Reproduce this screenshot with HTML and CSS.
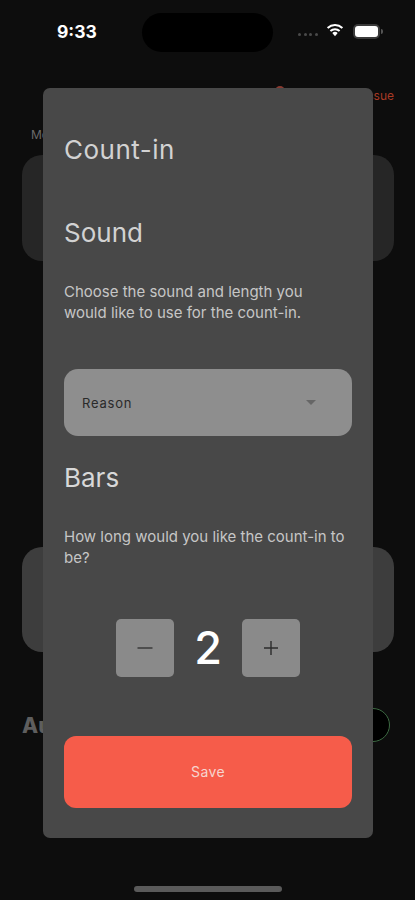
FILE: index.html
```html
<!DOCTYPE html>
<html lang="en">
<head>
<meta charset="utf-8">
<title>Count-in</title>
<link rel="stylesheet" href="styles.css">
</head>
<body>
<div class="screen">
  <div class="status">
    <span class="time">9:33</span>
    <div class="island"></div>
    <div class="status-icons">
      <div class="dots"><i></i><i></i><i></i><i></i></div>
      <svg class="wifi" width="18" height="14" viewBox="0 0 18 14"><path d="M9 13.2 6.3 10.1a3.9 3.9 0 0 1 5.4 0L9 13.2Z" fill="#fff"/><path d="M4.4 8a6.8 6.8 0 0 1 9.2 0" fill="none" stroke="#fff" stroke-width="2"/><path d="M1.6 4.9a11 11 0 0 1 14.8 0" fill="none" stroke="#fff" stroke-width="2"/></svg>
      <div class="battery"><div class="battery-fill"></div></div>
      <div class="battery-cap"></div>
    </div>
  </div>

  <div class="behind">
    <div class="issue">
      <span class="issue-icon"></span>
      <span>Report an issue</span>
    </div>
    <div class="label">Mode</div>
    <div class="card"></div>
    <div class="card card-second"></div>
    <div class="auto-row">
      <span class="auto">Auto</span>
      <span class="toggle"></span>
    </div>
  </div>

  <div class="modal">
    <h2 class="title">Count-in</h2>
    <h2 class="heading heading-sound">Sound</h2>
    <p class="copy copy-sound">Choose the sound and length you would like to use for the count-in.</p>
    <div class="select">
      <span>Reason</span>
      <span class="caret"></span>
    </div>
    <h2 class="heading heading-bars">Bars</h2>
    <p class="copy copy-bars">How long would you like the count-in to be?</p>
    <div class="stepper">
      <div class="step"><svg width="16" height="16" viewBox="0 0 16 16"><path d="M0.5 8h15" stroke="#484848" stroke-width="1.8"/></svg></div>
      <span class="value">2</span>
      <div class="step"><svg width="16" height="16" viewBox="0 0 16 16"><path d="M1 8h14M8 1v14" stroke="#2c2c2c" stroke-width="1.4"/></svg></div>
    </div>
    <div class="save">Save</div>
  </div>

  <div class="home-bar"></div>
</div>
</body>
</html>
```
FILE: styles.css
```css
* { box-sizing: border-box; }
html, body { margin: 0; padding: 0; background: #0d0d0d; }
body { font-family: Inter, "Noto Sans", sans-serif; }
.screen { position: relative; width: 415px; height: 900px; overflow: hidden; background: #0d0d0d; }

.status { display: flex; align-items: center; height: 40px; margin-top: 12px; padding: 0 0 0 57px; position: relative; }
.time { color: #fff; font-size: 17.5px; font-weight: 700; width: 85px; margin-top: -1px; }
.island { width: 131px; height: 39px; background: #000; border-radius: 20px; }
.status-icons { display: flex; align-items: center; margin-left: 25px; margin-top: -2px; }
.dots { display: flex; gap: 2.5px; margin-top: 6px; margin-right: 8px; }
.dots i { width: 3px; height: 3px; border-radius: 50%; background: #4a4a4a; }
.wifi { margin-right: 9px; margin-top: -2px; }
.battery { width: 27px; height: 15px; padding: 2px; border-radius: 5px; background: #3a3a3a; }
.battery-fill { width: 100%; height: 100%; background: #fff; border-radius: 3px; }
.battery-cap { width: 2px; height: 5px; margin-left: 1px; background: #555; border-radius: 0 2px 2px 0; }

.behind { padding: 34px 21px 0 22px; }
.issue { display: flex; align-items: center; justify-content: flex-end; gap: 21px; height: 18px; color: #a83a25; font-size: 12px; }
.issue-icon { align-self: flex-start; width: 10px; height: 10px; border-radius: 50%; background: #8a3a30; }
.label { color: #6a6a6a; font-size: 12px; line-height: 16px; margin: 23px 0 0 9px; }
.card { height: 106px; margin-top: 12px; background: #262626; border-radius: 20px; }
.card-second { margin-top: 286px; height: 105px; background: #3d3d3d; }
.auto-row { display: flex; align-items: center; justify-content: space-between; margin-top: 56px; padding-right: 4px; }
.auto { color: #5e5e5e; font-size: 21px; font-weight: 800; }
.toggle { width: 34px; height: 34px; border-radius: 50%; background: #000; border: 1.5px solid #3c6a42; }

.modal { position: absolute; left: 43px; top: 88px; width: 330px; height: 750px; padding: 0 21px; background: #484848; border-radius: 7px; }
.title, .heading { margin: 0; color: #d2d2d2; font-size: 26px; font-weight: 400; line-height: 32px; }
.title { margin-top: 46px; letter-spacing: 0.5px; }
.heading-sound { margin-top: 51px; }
.copy { margin: 0; padding-right: 4px; color: #c6c6c6; font-size: 15px; line-height: 21px; }
.copy-sound { margin-top: 32px; }
.select { display: flex; align-items: center; justify-content: space-between; height: 67px; margin-top: 46px; padding: 0 36px 0 18px; background: #8e8e8e; border-radius: 14px; color: #2a2a2a; font-size: 13px; letter-spacing: 0.8px; }
.caret { width: 0; height: 0; border-left: 5px solid transparent; border-right: 5px solid transparent; border-top: 5px solid #666; }
.heading-bars { margin-top: 26px; color: #d8d8d8; }
.copy-bars { margin-top: 32px; }
.stepper { display: flex; align-items: center; justify-content: center; gap: 17px; margin-top: 51px; }
.step { display: flex; align-items: center; justify-content: center; width: 58px; height: 58px; background: #8a8a8a; border-radius: 5px; }
.value { width: 34px; text-align: center; color: #fff; font-size: 45px; font-weight: 500; line-height: 58px; }
.save { display: flex; align-items: center; justify-content: center; height: 72px; margin-top: 59px; padding-bottom: 2px; background: #f65c4a; border-radius: 12px; color: #f6d5cf; font-size: 14px; letter-spacing: 0.4px; }

.home-bar { position: absolute; left: 134px; top: 886px; width: 148px; height: 6px; background: #5a5a5a; border-radius: 3px; }
```
